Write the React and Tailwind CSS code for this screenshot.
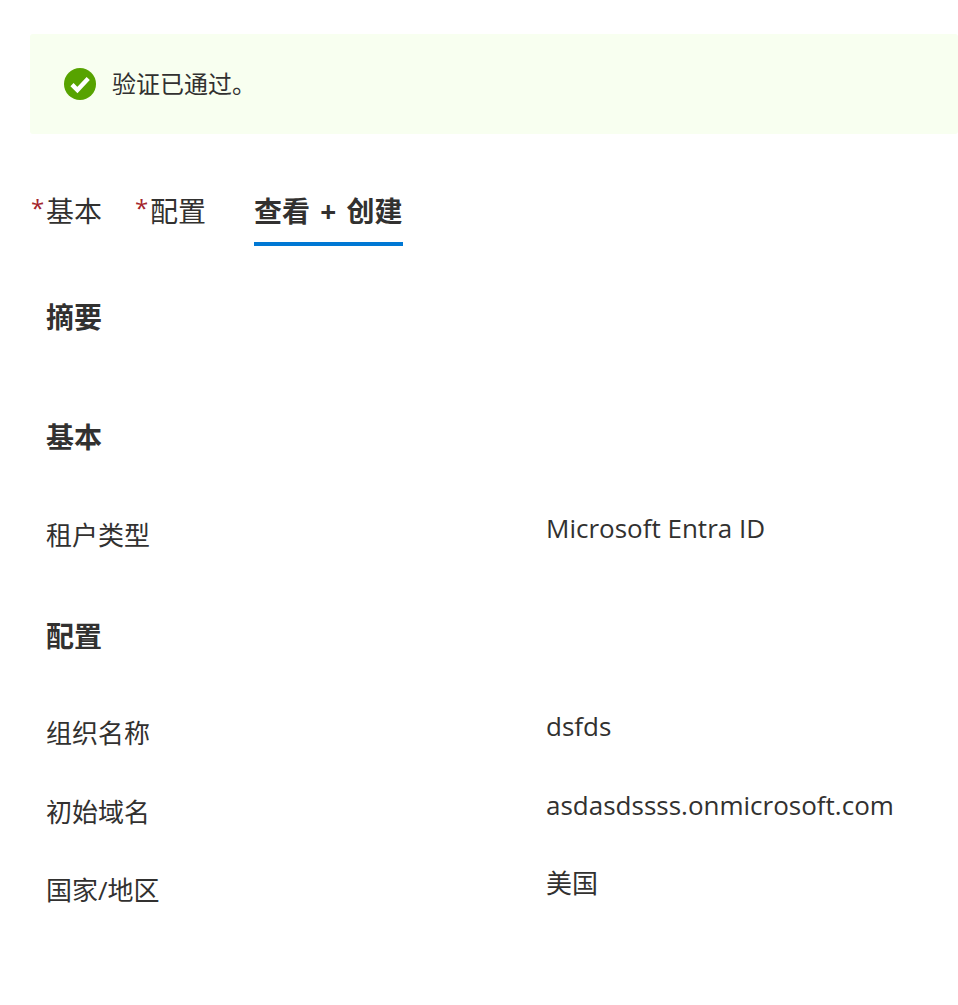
const cjk = "font-['Open_Sans','Noto_Sans_CJK_SC',sans-serif]"

function SectionTitle({ children, className }) {
  return <h2 className={`pl-[46px] text-[28px] leading-[40px] font-bold text-[#323130] ${className}`}>{children}</h2>
}

function Row({ label, value, className }) {
  return (
    <div className={`flex text-[#323130] ${className}`}>
      <div className="w-[546px] pl-[46px] pt-[7px] text-[26px] leading-[36px]">{label}</div>
      <div className="text-[26px] leading-[36px]">{value}</div>
    </div>
  )
}

function Tab({ children, required, active }) {
  return (
    <div className={`flex flex-col ${active ? 'font-bold' : ''}`}>
      <div className="flex h-[40px] items-center text-[28px] leading-[40px] text-[#323130] [word-spacing:3px]">
        {required && <span className="w-[15px] self-start text-[24px] leading-[34px] text-[#a4262c]">*</span>}
        {children}
      </div>
      <div className={`mt-[11px] h-[4px] ${active ? 'bg-[#0078d4]' : ''}`} />
    </div>
  )
}

export default function App() {
  return (
    <div className={`min-h-[1005px] bg-white pt-[34px] pl-[30px] ${cjk}`}>
      <div className="flex h-[100px] items-center rounded-[3px] bg-[#f8fff0] pl-[34px]">
        <svg width="32" height="32" viewBox="0 0 32 32" aria-hidden="true">
          <circle cx="16" cy="16" r="16" fill="#57a300" />
          <path d="M8 16.6l5.4 5.4L24.2 10.6" fill="none" stroke="#fff" strokeWidth="4.4" />
        </svg>
        <span className="ml-[16px] text-[24px] leading-[34px] text-[#323130]">验证已通过。</span>
      </div>

      <div className="-ml-[30px]">
        <div className="mt-[57px] flex pl-[31px]">
          <Tab required>基本</Tab>
          <div className="w-[33px]" />
          <Tab required>配置</Tab>
          <div className="w-[48px]" />
          <Tab active>查看 + 创建</Tab>
        </div>

        <SectionTitle className="mt-[51px]">摘要</SectionTitle>
        <SectionTitle className="mt-[80px]">基本</SectionTitle>
        <Row className="mt-[53px]" label="租户类型" value="Microsoft Entra ID" />
        <SectionTitle className="mt-[63px]">配置</SectionTitle>
        <Row className="mt-[52px]" label="组织名称" value="dsfds" />
        <Row className="mt-[36px]" label="初始域名" value="asdasdssss.onmicrosoft.com" />
        <Row className="mt-[35px]" label="国家/地区" value="美国" />
      </div>
    </div>
  )
}
